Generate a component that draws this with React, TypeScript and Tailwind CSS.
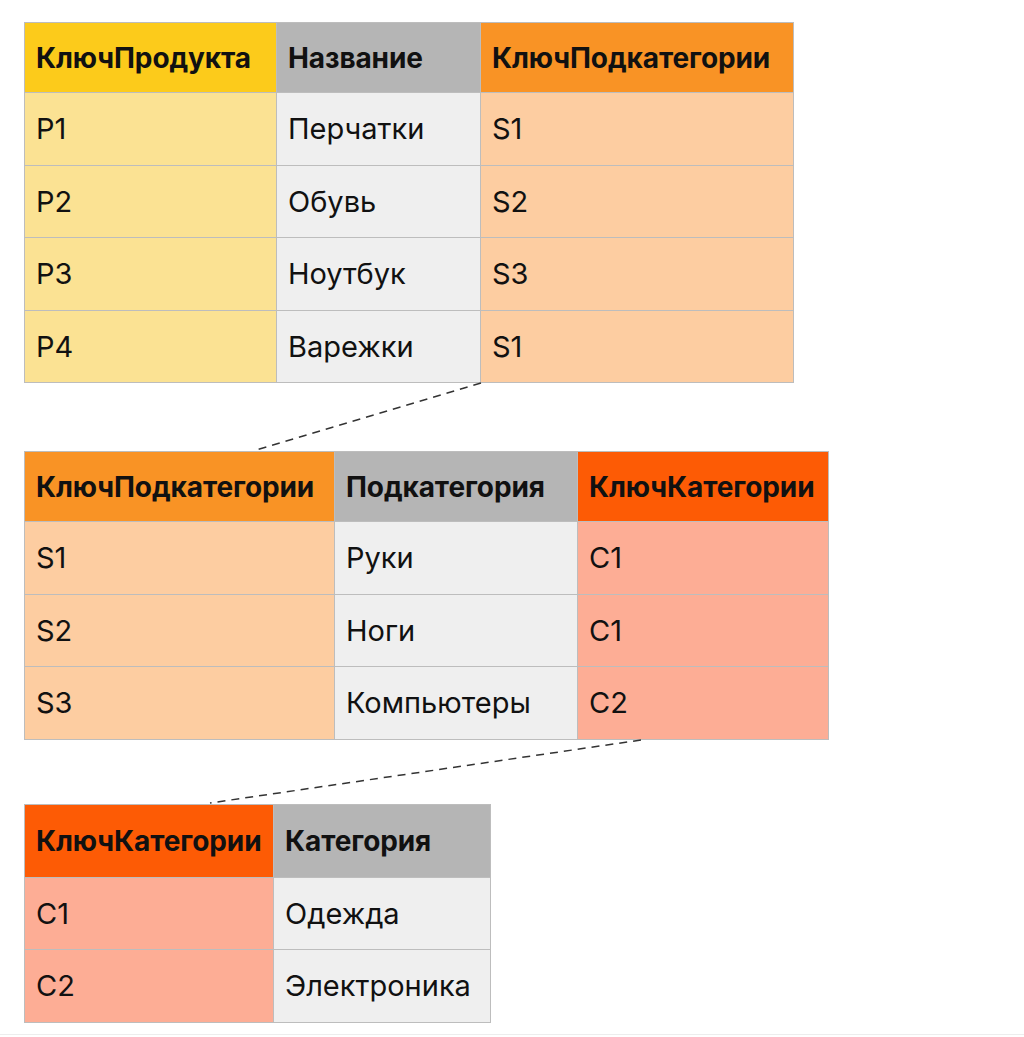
import React from 'react';

type Column = {
  title: string;
  width: number;
  head: string;
  body: string;
  values: string[];
};

const tables: Column[][] = [
  [
    { title: 'КлючПродукта', width: 252, head: 'bg-[#fccb1b]', body: 'bg-[#fbe293]', values: ['P1', 'P2', 'P3', 'P4'] },
    { title: 'Название', width: 204, head: 'bg-[#b5b5b5]', body: 'bg-[#efefef]', values: ['Перчатки', 'Обувь', 'Ноутбук', 'Варежки'] },
    { title: 'КлючПодкатегории', width: 313, head: 'bg-[#f99325]', body: 'bg-[#fdcda1]', values: ['S1', 'S2', 'S3', 'S1'] },
  ],
  [
    { title: 'КлючПодкатегории', width: 310, head: 'bg-[#f99325]', body: 'bg-[#fdcda1]', values: ['S1', 'S2', 'S3'] },
    { title: 'Подкатегория', width: 243, head: 'bg-[#b5b5b5]', body: 'bg-[#efefef]', values: ['Руки', 'Ноги', 'Компьютеры'] },
    { title: 'КлючКатегории', width: 251, head: 'bg-[#fd5b05]', body: 'bg-[#fdad95]', values: ['C1', 'C1', 'C2'] },
  ],
  [
    { title: 'КлючКатегории', width: 249, head: 'bg-[#fd5b05]', body: 'bg-[#fdad95]', values: ['C1', 'C2'] },
    { title: 'Категория', width: 217, head: 'bg-[#b5b5b5]', body: 'bg-[#efefef]', values: ['Одежда', 'Электроника'] },
  ],
];

const KeyTable = ({ columns, headHeight }: { columns: Column[]; headHeight: string }) => {
  const rows = columns[0].values.length;
  return (
    <table className="border-collapse border border-[#bdbdbd] table-fixed">
      <thead>
        <tr className={headHeight}>
          {columns.map(col => (
            <th
              key={col.title}
              style={{ width: col.width }}
              className={`${col.head} border border-[#bdbdbd] px-[11px] text-left align-middle text-[28px] font-bold tracking-[-0.1px] text-[#111]`}
            >
              {col.title}
            </th>
          ))}
        </tr>
      </thead>
      <tbody>
        {Array.from({ length: rows }).map((_, i) => (
          <tr key={i} className="h-[72.5px]">
            {columns.map(col => (
              <td
                key={col.title}
                className={`${col.body} border border-[#bdbdbd] px-[11px] align-middle text-[29px] text-[#111]`}
              >
                {col.values[i]}
              </td>
            ))}
          </tr>
        ))}
      </tbody>
    </table>
  );
};

export default function App() {
  return (
    <div className="relative w-[1024px] h-[1037px] bg-white" style={{ fontFamily: 'Inter, "Noto Sans", sans-serif' }}>
      <div className="flex flex-col items-start pl-[24px] pt-[22px]">
        <KeyTable columns={tables[0]} headHeight="h-[70px]" />
        <div className="h-[68px]" />
        <KeyTable columns={tables[1]} headHeight="h-[70px]" />
        <div className="h-[64px]" />
        <KeyTable columns={tables[2]} headHeight="h-[73px]" />
      </div>

      {/* connector lines between key columns */}
      <svg className="absolute inset-0 pointer-events-none" width="1024" height="1037">
        <line x1="481" y1="383" x2="256" y2="450" stroke="#333" strokeWidth="1.5" strokeDasharray="8 6" />
        <line x1="641" y1="740" x2="210" y2="803" stroke="#333" strokeWidth="1.5" strokeDasharray="8 6" />
      </svg>

      <div className="absolute left-0 right-0 top-[1034px] h-px bg-[#ededed]" />
    </div>
  );
}
